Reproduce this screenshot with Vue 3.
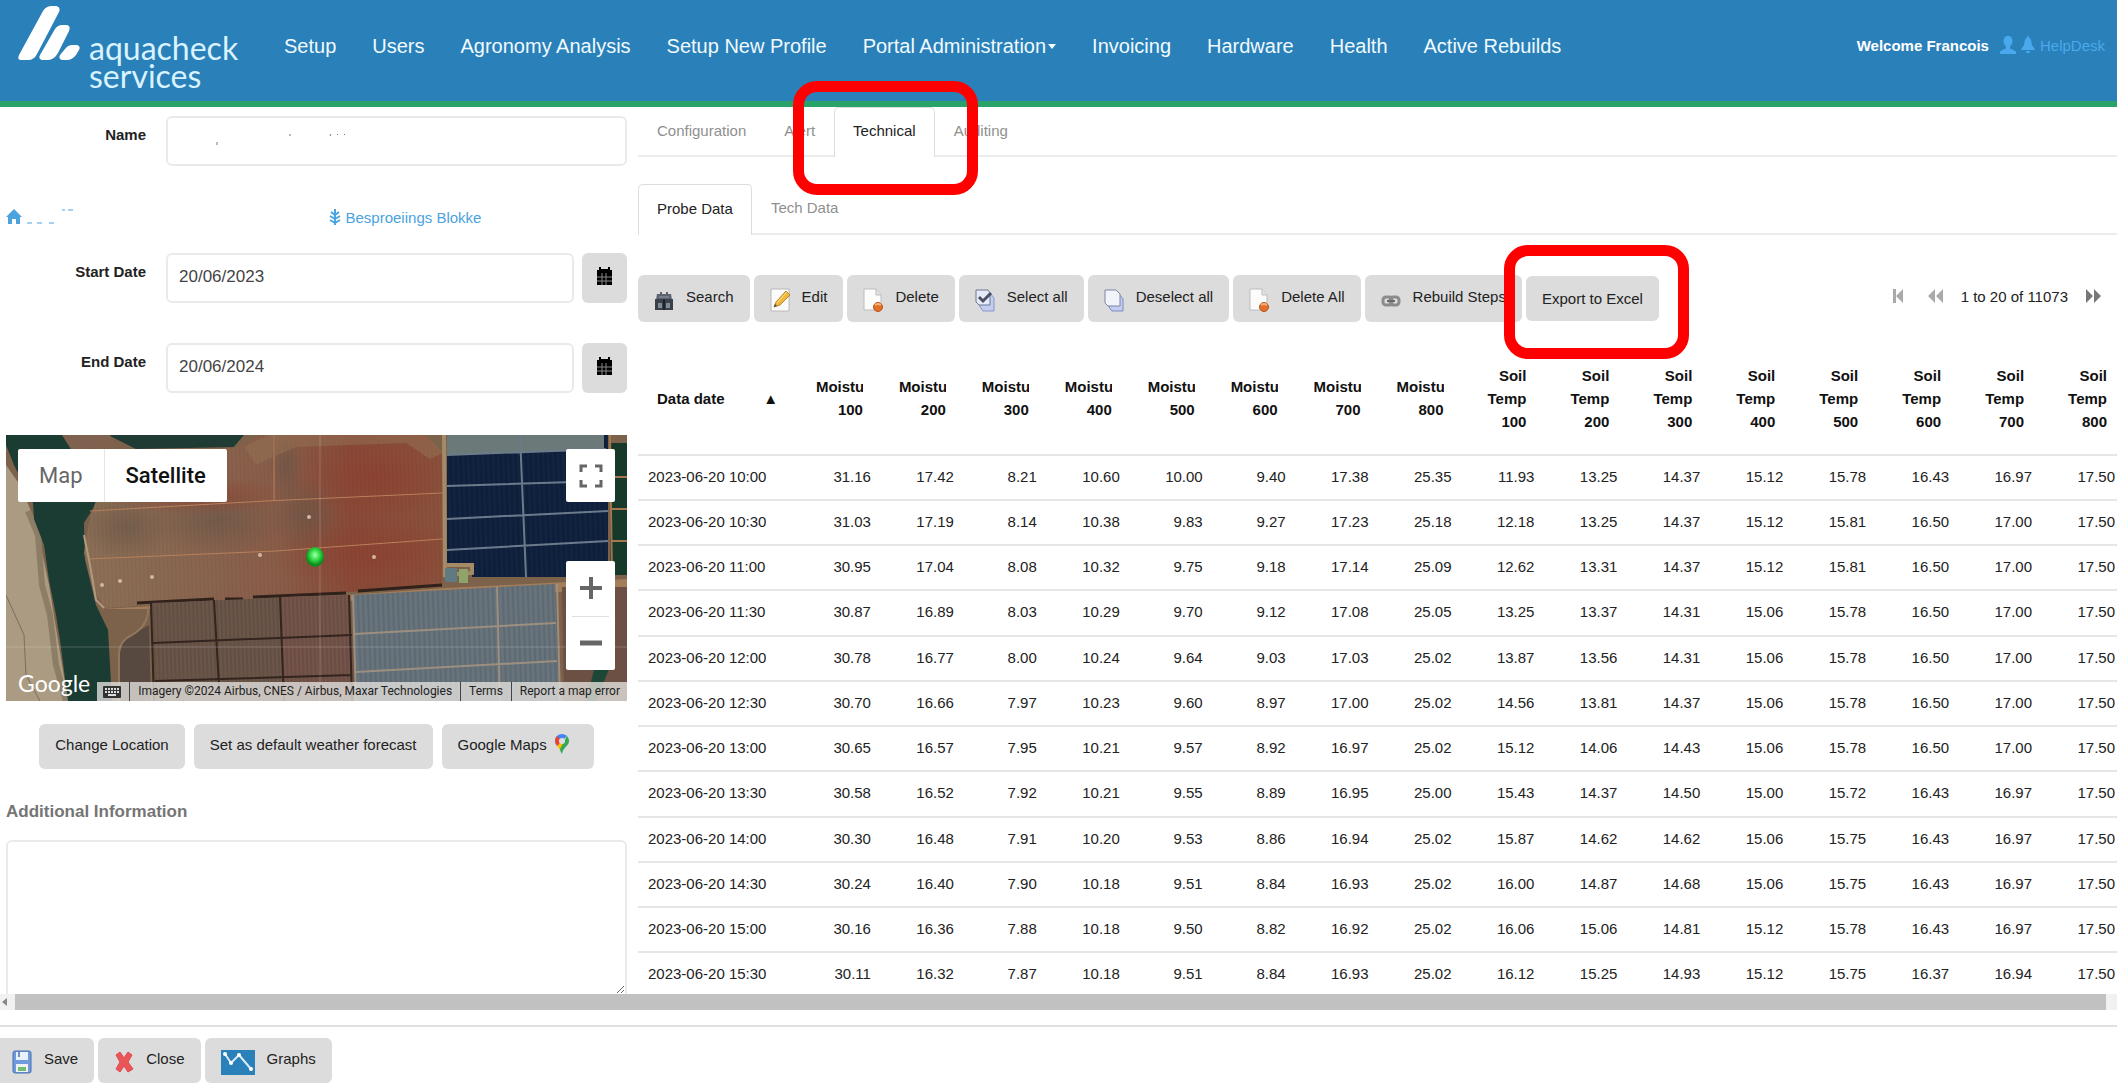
<script setup>
import { ref } from 'vue';

const menu = ['Setup', 'Users', 'Agronomy Analysis', 'Setup New Profile', 'Portal Administration', 'Invoicing', 'Hardware', 'Health', 'Active Rebuilds'];
const tabs = ['Configuration', 'Alert', 'Technical', 'Auditing'];
const subTabs = ['Probe Data', 'Tech Data'];

const activeTab = ref('Technical');
const activeSubTab = ref('Probe Data');
const name = ref('');
const startDate = ref('20/06/2023');
const endDate = ref('20/06/2024');
const info = ref('');

const tools = [
  { label: 'Search', icon: 'search' },
  { label: 'Edit', icon: 'edit' },
  { label: 'Delete', icon: 'delete' },
  { label: 'Select all', icon: 'select' },
  { label: 'Deselect all', icon: 'deselect' },
  { label: 'Delete All', icon: 'delete' },
  { label: 'Rebuild Steps', icon: 'link' }
];

const depths = [100, 200, 300, 400, 500, 600, 700, 800];

const rows = [
  ['2023-06-20 10:00', '31.16', '17.42', '8.21', '10.60', '10.00', '9.40', '17.38', '25.35', '11.93', '13.25', '14.37', '15.12', '15.78', '16.43', '16.97', '17.50'],
  ['2023-06-20 10:30', '31.03', '17.19', '8.14', '10.38', '9.83', '9.27', '17.23', '25.18', '12.18', '13.25', '14.37', '15.12', '15.81', '16.50', '17.00', '17.50'],
  ['2023-06-20 11:00', '30.95', '17.04', '8.08', '10.32', '9.75', '9.18', '17.14', '25.09', '12.62', '13.31', '14.37', '15.12', '15.81', '16.50', '17.00', '17.50'],
  ['2023-06-20 11:30', '30.87', '16.89', '8.03', '10.29', '9.70', '9.12', '17.08', '25.05', '13.25', '13.37', '14.31', '15.06', '15.78', '16.50', '17.00', '17.50'],
  ['2023-06-20 12:00', '30.78', '16.77', '8.00', '10.24', '9.64', '9.03', '17.03', '25.02', '13.87', '13.56', '14.31', '15.06', '15.78', '16.50', '17.00', '17.50'],
  ['2023-06-20 12:30', '30.70', '16.66', '7.97', '10.23', '9.60', '8.97', '17.00', '25.02', '14.56', '13.81', '14.37', '15.06', '15.78', '16.50', '17.00', '17.50'],
  ['2023-06-20 13:00', '30.65', '16.57', '7.95', '10.21', '9.57', '8.92', '16.97', '25.02', '15.12', '14.06', '14.43', '15.06', '15.78', '16.50', '17.00', '17.50'],
  ['2023-06-20 13:30', '30.58', '16.52', '7.92', '10.21', '9.55', '8.89', '16.95', '25.00', '15.43', '14.37', '14.50', '15.00', '15.72', '16.43', '16.97', '17.50'],
  ['2023-06-20 14:00', '30.30', '16.48', '7.91', '10.20', '9.53', '8.86', '16.94', '25.02', '15.87', '14.62', '14.62', '15.06', '15.75', '16.43', '16.97', '17.50'],
  ['2023-06-20 14:30', '30.24', '16.40', '7.90', '10.18', '9.51', '8.84', '16.93', '25.02', '16.00', '14.87', '14.68', '15.06', '15.75', '16.43', '16.97', '17.50'],
  ['2023-06-20 15:00', '30.16', '16.36', '7.88', '10.18', '9.50', '8.82', '16.92', '25.02', '16.06', '15.06', '14.81', '15.12', '15.78', '16.43', '16.97', '17.50'],
  ['2023-06-20 15:30', '30.11', '16.32', '7.87', '10.18', '9.51', '8.84', '16.93', '25.02', '16.12', '15.25', '14.93', '15.12', '15.75', '16.37', '16.94', '17.50']
];
</script>

<template>
  <div class="page">
    <header class="topbar">
      <a href="#" class="brand">
        <svg class="brand-mark" viewBox="0 0 62 56" aria-hidden="true">
          <g fill="#fff">
            <path d="M25 5Q28 0 34 0H38Q43 1 41 6L19 48Q16 54 10 54H3Q-1 54 1 49Z" />
            <path d="M37 23Q40 19 44 19H49Q53 20 51 25L40 47Q36 54 30 54H24Q20 53 22 49Z" />
            <path d="M47 43Q50 39 54 39H59Q63 40 61 44L58 49Q54 54 49 54H44Q40 53 42 49Z" />
          </g>
        </svg>
        <span class="brand-name">aquacheck<br>services</span>
      </a>
      <nav class="menu">
        <a v-for="item in menu" :key="item" href="#">{{ item }}<span v-if="item === 'Portal Administration'" class="caret"></span></a>
      </nav>
      <div class="user">
        <strong>Welcome Francois</strong>
        <a href="#" aria-label="Profile">
          <svg width="16" height="18" viewBox="0 0 16 18"><path fill="currentColor" d="M8 0C5 0 3.500 2 3.500 5c0 2.500 1 4.500 2.500 5.500V12c0 1-5 2-6 4v2h16v-2c-1-2-6-3-6-4v-1.500C11.500 9.500 12.500 7.500 12.500 5 12.500 2 11 0 8 0Z" /></svg>
        </a>
        <a href="#" aria-label="Notifications">
          <svg width="14" height="18" viewBox="0 0 14 18"><path fill="currentColor" d="M7 0C6 0 6 1 6 1.500 3.500 3 3.500 6 3 9c-.4 2-3 3-3 5h14c0-2-2.600-3-3-5-.5-3-.5-6-3-7.500C8 1 8 0 7 0ZM5 15h4c0 3-4 3-4 0Z" /></svg>
        </a>
        <a href="#">HelpDesk</a>
      </div>
    </header>

    <main class="body">
      <section class="left">
        <div class="field">
          <label for="name">Name</label>
          <div class="control">
            <input id="name" v-model="name" type="text">
            <svg class="traces" width="140" height="12" viewBox="0 0 140 12" aria-hidden="true">
              <path d="M1 9v3M74 1v2M114 3l1-2M121 2l1-1M128 2l1-1" stroke="#777" fill="none" />
            </svg>
          </div>
        </div>

        <div class="links">
          <a href="#" aria-label="Home">
            <svg width="88" height="18" viewBox="0 0 88 18">
              <path fill="currentColor" d="M8 1 0 9h2v7h4v-5h4v5h4V9h2Z" />
              <path d="M21 15h5M31 15h5M43 15h5M56 2h3M62 2h5" stroke="currentColor" />
            </svg>
          </a>
          <a href="#" class="block-link">
            <svg width="12" height="16" viewBox="0 0 12 16"><path d="M6 0v16M6 6 2 3M6 6l4-3M6 10 1 7M6 10l5-3M6 14l-5-3M6 14l5-3" stroke="currentColor" stroke-width="2" fill="none" /></svg>
            Besproeiings Blokke
          </a>
        </div>

        <div class="field">
          <label for="start">Start Date</label>
          <div class="control">
            <input id="start" v-model="startDate" type="text">
            <button class="btn calendar" aria-label="Pick start date">
              <svg width="15" height="18" viewBox="0 0 15 18"><path d="M2 0h2v2h7V0h2v3h2v3H0V3h2Z" /><path d="M0 6h15v12H0Z" /><path d="M0 10h15M0 14h15M5 6v12M9 6v12" stroke="#888" /></svg>
            </button>
          </div>
        </div>

        <div class="field">
          <label for="end">End Date</label>
          <div class="control">
            <input id="end" v-model="endDate" type="text">
            <button class="btn calendar" aria-label="Pick end date">
              <svg width="15" height="18" viewBox="0 0 15 18"><path d="M2 0h2v2h7V0h2v3h2v3H0V3h2Z" /><path d="M0 6h15v12H0Z" /><path d="M0 10h15M0 14h15M5 6v12M9 6v12" stroke="#888" /></svg>
            </button>
          </div>
        </div>

        <div class="map">
          <svg class="imagery" viewBox="0 0 621 266" preserveAspectRatio="none" aria-hidden="true">
            <defs>
              <linearGradient id="soil" x1="0" x2="1" y1="0" y2="0">
                <stop offset="0" stop-color="#8c7056" />
                <stop offset=".3" stop-color="#8a6650" />
                <stop offset=".55" stop-color="#8a5c48" />
                <stop offset=".75" stop-color="#8a4a38" />
                <stop offset="1" stop-color="#8b523c" />
              </linearGradient>
              <radialGradient id="shade">
                <stop offset="0" stop-color="#665548" stop-opacity=".6" />
                <stop offset="1" stop-color="#665548" stop-opacity="0" />
              </radialGradient>
              <radialGradient id="rust">
                <stop offset="0" stop-color="#8f402f" stop-opacity=".7" />
                <stop offset="1" stop-color="#8f402f" stop-opacity="0" />
              </radialGradient>
              <radialGradient id="pin" cx=".5" cy=".4">
                <stop offset="0" stop-color="#a9ffb0" />
                <stop offset=".5" stop-color="#35e04a" />
                <stop offset="1" stop-color="#0d8a1c" />
              </radialGradient>
              <pattern id="vines" width="4" height="8" patternUnits="userSpaceOnUse" patternTransform="rotate(-2)">
                <path d="M1 0v8" stroke="#2b2320" stroke-opacity=".3" />
              </pattern>
              <pattern id="rowsBlue" width="5" height="8" patternUnits="userSpaceOnUse" patternTransform="rotate(-2)">
                <path d="M1 0v8" stroke="#20344d" stroke-opacity=".5" />
              </pattern>
            </defs>
            <rect width="621" height="266" fill="#7c614b" />
            <path d="M0 30 14 50 30 88 43 150 52 205 62 266H0Z" fill="#ab9b82" />
            <path d="M22 76 32 100 36 150 44 180 50 230 60 266" stroke="#8c7d66" stroke-width="6" fill="none" />
            <path d="M0 160 18 200 20 240 34 266" stroke="#7c6e5a" fill="none" />
            <path d="M0 0H56L66 16 92 66 78 88 79 125 90 170 102 195 106 266H62L54 205 50 180 43 145 38 110 28 84 27 68 8 30 0 10Z" fill="#1b3c33" />
            <path d="M102 0H238L226 14 130 14Z" fill="#203a34" />
            <path d="M56 0H104L112 12 66 14Z" fill="#80604e" />
            <path d="M90 66 130 14 232 12 254 0H420L437 20 436 152 340 157 98 173 86 150 78 118 84 82Z" fill="url(#soil)" />
            <ellipse cx="120" cy="92" rx="46" ry="34" fill="url(#shade)" />
            <ellipse cx="210" cy="86" rx="70" ry="34" fill="url(#shade)" />
            <ellipse cx="300" cy="80" rx="36" ry="40" fill="url(#shade)" />
            <ellipse cx="280" cy="32" rx="18" ry="34" fill="url(#shade)" />
            <ellipse cx="370" cy="42" rx="80" ry="44" fill="url(#rust)" />
            <ellipse cx="370" cy="120" rx="100" ry="38" fill="url(#rust)" />
            <ellipse cx="190" cy="60" rx="90" ry="20" fill="url(#rust)" />
            <path d="M90 66 130 14 232 12 254 0H420L437 20 436 152 340 157 98 173 86 150 78 118 84 82Z" fill="url(#vines)" fill-opacity=".4" />
            <path d="M84 76 260 66 436 58M82 124 270 116 436 104M268 0V66" stroke="#b8805a" fill="none" />
            <path d="M78 100 84 130 90 165 98 173" stroke="#b19a7e" stroke-width="2" fill="none" />
            <path d="M238 12 262 0H420L437 18 424 24 400 8 290 12 250 30Z" fill="#937253" fill-opacity=".5" />
            <g fill="#d0b8a4"><circle cx="96" cy="150" r="2" /><circle cx="114" cy="146" r="2" /><circle cx="146" cy="142" r="2" /><circle cx="254" cy="120" r="2" /><circle cx="303" cy="82" r="2" /><circle cx="368" cy="122" r="2" /></g>
            <path d="M441 0H602V142H466V128H441Z" fill="#0e1f3b" />
            <path d="M441 0H602V142H466V128H441Z" fill="url(#rowsBlue)" />
            <path d="M441 0H598V14L441 20Z" fill="#6b7a78" />
            <path d="M441 20 600 14M441 51 600 46M441 84 602 76M441 115 602 106M514 0 520 142" stroke="#6c7b8c" stroke-width="2" fill="none" />
            <path d="M438 0 439 140 466 138V130H441" stroke="#a58a66" stroke-width="4" fill="none" />
            <path d="M604 8H621V140H604Z" fill="#17392a" />
            <path d="M604 0 606 146M606 42H621M606 74H621M606 106H621" stroke="#a3784f" stroke-width="2" />
            <path d="M439 133h12v14h-12Z" fill="#5f7a80" />
            <path d="M453 134h9v14h-9Z" fill="#8fa46a" />
            <path d="M96 174 340 160 440 153 621 144V154L340 166 140 174Z" fill="#a47d5b" />
            <path d="M131 168 208 164M219 164h18M247 162 340 158M352 156 436 150" stroke="#30211b" stroke-width="3" />
            <path d="M145 168 344 160 350 266H147Z" fill="#6b5649" />
            <path d="M276 162 344 160 348 266H278Z" fill="#75544a" />
            <path d="M145 168 344 160 350 266H147Z" fill="url(#vines)" />
            <path d="M147 208 346 200M149 246 346 240M145 168 148 266M208 165 213 250M274 162 278 266M343 160 346 266" stroke="#33241e" stroke-width="2" fill="none" />
            <path d="M113 266V218Q114 205 126 200L143 190 145 266Z" fill="#57493f" />
            <path d="M113 266V218Q114 205 126 200 143 190 142 172" stroke="#91775e" stroke-width="2" fill="none" />
            <path d="M348 160 549 149 553 266H350Z" fill="#68737a" />
            <path d="M348 160 549 149 553 266H350Z" fill="url(#rowsBlue)" fill-opacity=".6" />
            <path d="M348 199 550 188M350 237 551 226M491 152 494 266M347 160 350 266M551 149 554 266" stroke="#9c8f7f" stroke-width="2" fill="none" />
            <path d="M556 152H621V266H558Z" fill="#6b5043" />
            <path d="M580 266 588 235 600 220 608 222 590 266Z" fill="#1c4636" />
            <path d="M314 0V266M0 212H621" stroke="#fff" stroke-opacity=".2" />
            <ellipse cx="309" cy="122" rx="9" ry="10" fill="url(#pin)" />
          </svg>
          <div class="map-type">
            <button>Map</button>
            <button class="active">Satellite</button>
          </div>
          <button class="fullscreen" aria-label="Toggle fullscreen view">
            <svg width="24" height="24" viewBox="0 0 24 24"><path d="M2 8V2h6M16 2h6v6M22 16v6h-6M8 22H2v-6" stroke="#666" stroke-width="3" fill="none" /></svg>
          </button>
          <div class="zoom">
            <button aria-label="Zoom in"><svg width="24" height="24" viewBox="0 0 24 24"><path d="M12 1v22M1 12h22" stroke="#666" stroke-width="4" /></svg></button>
            <button aria-label="Zoom out"><svg width="24" height="24" viewBox="0 0 24 24"><path d="M1 12h22" stroke="#666" stroke-width="5" /></svg></button>
          </div>
          <span class="google">Google</span>
          <div class="credits">
            <svg width="18" height="12" viewBox="0 0 18 12"><rect width="18" height="12" rx="1" fill="#333" /><path d="M2 3h14M2 6h14" stroke="#ddd" stroke-width="2" stroke-dasharray="2 1" /><path d="M5 9h8" stroke="#ddd" stroke-width="2" /></svg>
            <span>Imagery ©2024 Airbus, CNES / Airbus, Maxar Technologies</span>
            <a href="#">Terms</a>
            <a href="#">Report a map error</a>
          </div>
        </div>

        <div class="map-actions">
          <button class="btn">Change Location</button>
          <button class="btn">Set as default weather forecast</button>
          <button class="btn maps">
            Google Maps
            <svg width="14" height="20" viewBox="0 0 14 20">
              <path d="M7 0C3 0 0 3 0 7c0 2 1 4 2 5L12 2C11 1 9 0 7 0Z" fill="#4285f4" />
              <path d="M2 2 7 7 3 12C1 10 0 9 0 7c0-2 1-4 2-5Z" fill="#ea4335" />
              <path d="M2 12 7 7l3 3-5 6Z" fill="#fbbc04" />
              <path d="M12 2c1 1 2 3 2 5 0 5-6 6-7 13-1-2-2-3-2-5Z" fill="#34a853" />
              <circle cx="7" cy="7" r="3" fill="#ddd" />
            </svg>
          </button>
        </div>

        <label class="info-label" for="info">Additional Information</label>
        <textarea id="info" v-model="info"></textarea>
      </section>

      <section class="right">
        <nav class="tabs">
          <button v-for="tab in tabs" :key="tab" :class="['tab', { active: tab === activeTab, marked: tab === 'Technical' }]" @click="activeTab = tab">{{ tab }}</button>
        </nav>
        <nav class="tabs sub">
          <button v-for="tab in subTabs" :key="tab" :class="['tab', { active: tab === activeSubTab }]" @click="activeSubTab = tab">{{ tab }}</button>
        </nav>

        <div class="toolbar">
          <button v-for="tool in tools" :key="tool.label" class="btn tool">
            <svg v-if="tool.icon === 'search'" class="icon" viewBox="0 0 20 24">
              <path d="M3 6h3V4h2v2h4V4h2v2h3l1 6H2Z" fill="#5b6470" />
              <path d="M1 11h18v11H1Z" fill="#3a414b" />
              <path d="M4 15h4v5H4ZM12 15h4v5h-4Z" fill="#7f8b99" />
              <path d="M5 9h10" stroke="#939da8" stroke-width="1" />
              <path d="M10 11v11" stroke="#222" stroke-width="2" />
            </svg>
            <svg v-else-if="tool.icon === 'edit'" class="icon" viewBox="0 0 20 24">
              <path d="M1 1h18v22H1Z" fill="#fbfbfb" stroke="#b8b8b8" />
              <path d="M4 19 6 14 16 3l4 4L10 17Z" fill="#f0b83a" stroke="#b98a2b" />
              <path d="M7 15 17 4" stroke="#ffe38d" stroke-width="1" />
              <path d="m4 19 1-3 2 2Z" fill="#444" />
            </svg>
            <svg v-else-if="tool.icon === 'delete'" class="icon" viewBox="0 0 20 24">
              <path d="M1 1h12l5 6v15H1Z" fill="#fcfcfc" stroke="#bdbdbd" />
              <path d="M13 1v6h5" fill="#e4e4e4" stroke="#bdbdbd" />
              <circle cx="15" cy="19" r="4.500" fill="#e2702a" stroke="#b85316" />
              <path d="M12 17q3-2 6 0" stroke="#f7b27c" stroke-width="2" fill="none" />
            </svg>
            <svg v-else-if="tool.icon === 'select'" class="icon" viewBox="0 0 20 24">
              <path d="M5 5h10l4 5v13H8l-4-6Z" fill="#c3cdf2" stroke="#8795c8" />
              <path d="M1 2h12l2 3v12H4l-3-3Z" fill="#e6eaf8" stroke="#6d7891" />
              <path d="m4 9 4 4 8-8" stroke="#4a5160" stroke-width="3" fill="none" />
            </svg>
            <svg v-else-if="tool.icon === 'deselect'" class="icon" viewBox="0 0 20 24">
              <path d="M6 6h9l4 5v12H8l-3-4Z" fill="#c3cdf2" stroke="#7d8bc2" />
              <path d="M1 2h11l4 4v12H4l-3-3Z" fill="#f2f4fc" stroke="#7b86a0" />
            </svg>
            <svg v-else class="icon" viewBox="0 0 20 24">
              <g fill="none" stroke="#8b8b8b" stroke-width="3"><rect x="2" y="9" width="9" height="8" rx="3" /><rect x="9" y="9" width="9" height="8" rx="3" /></g>
              <path d="M6 13h8" stroke="#6a6a6a" stroke-width="2" />
            </svg>
            <span>{{ tool.label }}</span>
          </button>
          <button class="btn export">Export to Excel</button>

          <div class="pager">
            <button class="first" aria-label="First page" disabled><svg width="12" height="14" viewBox="0 0 12 14"><path d="M1 0h3v14H1ZM11 0v14L4 7Z" fill="#aaa" /></svg></button>
            <button aria-label="Previous page" disabled><svg width="15" height="14" viewBox="0 0 15 14"><path d="M7 0v14L0 7ZM15 0v14L8 7Z" fill="#aaa" /></svg></button>
            <span>1 to 20 of 11073</span>
            <button aria-label="Next page"><svg width="15" height="14" viewBox="0 0 15 14"><path d="M0 0v14l7-7ZM8 0v14l7-7Z" fill="#777" /></svg></button>
          </div>
        </div>

        <div class="grid-wrap">
          <table class="grid">
            <thead>
              <tr>
                <th class="date"><div>Data date <span>▲</span></div></th>
                <th v-for="d in depths" :key="'m' + d"><span class="cut">Moistu</span>{{ d }}</th>
                <th v-for="d in depths" :key="'t' + d">Soil<br>Temp<br>{{ d }}</th>
              </tr>
            </thead>
            <tbody>
              <tr v-for="row in rows" :key="row[0]">
                <td v-for="(cell, i) in row" :key="i">{{ cell }}</td>
              </tr>
            </tbody>
          </table>
        </div>
      </section>
    </main>

    <div class="scrollbar" aria-hidden="true">
      <svg width="15" height="16" viewBox="0 0 15 16"><path d="M7 4v8L2 8Z" fill="#888" /></svg>
      <div class="thumb"></div>
    </div>

    <footer class="actions">
      <button class="btn tool save">
        <svg class="icon" viewBox="0 0 20 24">
          <path d="M1 3q0-2 2-2h14q2 0 2 2v18q0 2-2 2H3q-2 0-2-2Z" fill="#6f9bdc" stroke="#4a6fae" />
          <path d="M4 2h12v8H4Z" fill="#e9f1fc" />
          <path d="M7 2v5" stroke="#6f8fc2" stroke-width="2" />
          <path d="M4 14h12v8H4Z" fill="#eef2f6" />
          <path d="M6 17h8v4H6Z" fill="#6fbf6c" />
        </svg>
        <span>Save</span>
      </button>
      <button class="btn tool">
        <svg class="icon" viewBox="0 0 20 24">
          <path d="M2 5 6 2l4 6 4-6 4 3-4 7 5 7-5 3-4-6-4 6-4-3 4-7Z" fill="#ea5558" stroke="#e0484c" />
        </svg>
        <span>Close</span>
      </button>
      <button class="btn tool">
        <svg width="34" height="25" viewBox="0 0 34 25">
          <rect width="34" height="25" fill="#2a80b9" />
          <path d="m4 4 6 9 8-8 12 14" stroke="#d8ecf8" stroke-width="2" fill="none" />
          <g fill="#fff"><circle cx="4" cy="4" r="2" /><circle cx="10" cy="13" r="2" /><circle cx="18" cy="5" r="2" /><circle cx="30" cy="19" r="2" /></g>
        </svg>
        <span>Graphs</span>
      </button>
    </footer>
  </div>
</template>

<style>
body { background: #fff; overflow: hidden; }
</style>

<style scoped>
.page { height: 100vh; display: flex; flex-direction: column; font-family: "Liberation Sans", Arial, sans-serif; font-size: 15px; color: #222; }
.page *, .page *::after { box-sizing: border-box; }
a { text-decoration: none; color: inherit; }
button, input, textarea { font: inherit; color: inherit; }
button { cursor: pointer; }
svg { display: block; flex: none; }

/* Top bar */
.topbar { display: flex; height: 107px; flex: none; background: #2a80b9; border-bottom: 6px solid #2aa36b; color: #fff; padding: 0 12px 0 18px; }
.brand { display: flex; width: 266px; flex: none; }
.brand-mark { width: 62px; height: 56px; margin-top: 6px; }
.brand-name { margin: 34px 0 0 9px; font-family: Lato, sans-serif; font-size: 32px; line-height: 28px; color: #d9f3ff; }
.menu { display: flex; flex: 1; gap: 36px; padding-top: 34px; font-size: 20px; line-height: 24px; color: #f0faff; white-space: nowrap; }
.caret { display: inline-block; margin-left: 2px; vertical-align: 4px; border: 4px solid transparent; border-top: 5px solid; border-bottom: 0; }
.user { display: flex; align-items: center; height: 24px; gap: 5px; margin-top: 33px; color: #4aa9ec; }
.user strong { color: #fff; margin-right: 6px; }

.body { display: grid; grid-template-columns: minmax(0, 22fr) minmax(0, 51fr); flex: 1; min-height: 0; }

.btn { border: 0; border-radius: 6px; background: #dcdcdc; padding: 0 16px; height: 45px; white-space: nowrap; }

/* Left column */
.left { display: flex; flex-direction: column; min-height: 0; overflow: hidden; padding: 9px 11px 0 6px; }
.field { display: flex; gap: 20px; flex: none; }
.field + .field { margin-top: 40px; }
.field label { width: 140px; padding-bottom: 13px; align-self: center; text-align: right; font-weight: bold; }
.control { flex: 1; display: flex; gap: 8px; position: relative; }
.control input { flex: 1; min-width: 0; height: 50px; border: 2px solid #eaeaea; border-radius: 6px; padding: 0 11px 2px; font-size: 17px; color: #444; background: #fff; }
.traces { position: absolute; left: 50px; top: 17px; }
.calendar { width: 45px; height: 50px; display: grid; place-items: center; padding: 0 0 4px; }
.links { display: grid; grid-template-columns: 1fr 1fr; align-items: center; height: 24px; flex: none; margin: 39px 0 24px; color: #4aa3df; }
.block-link { display: flex; align-items: center; gap: 5px; padding-left: 12px; }

.map { position: relative; flex: none; height: 266px; margin-top: 42px; overflow: hidden; font-family: Roboto, sans-serif; }
.imagery { width: 100%; height: 100%; }
.map button { background: #fff; border: 0; padding: 0; }
.map-type { position: absolute; left: 12px; top: 14px; display: flex; height: 53px; border-radius: 2px; overflow: hidden; font-size: 22px; color: #666; }
.map .map-type button { padding: 0 21px; }
.map .map-type .active { border-left: 1px solid #e6e6e6; font-weight: 500; color: #111; }
.fullscreen { position: absolute; right: 12px; top: 14px; width: 49px; height: 53px; display: grid; place-items: center; border-radius: 2px; }
.zoom { position: absolute; right: 12px; bottom: 31px; width: 49px; height: 109px; padding: 0 6px; display: grid; grid-template-rows: 1fr 1fr; background: #fff; border-radius: 2px; }
.zoom button { display: grid; place-items: center; }
.zoom button + button { border-top: 1px solid #e0e0e0; }
.google { position: absolute; left: 12px; bottom: 4px; font-family: Lato, sans-serif; font-size: 23px; line-height: 28px; color: #fff; }
.credits { position: absolute; right: 0; bottom: 0; height: 19px; display: flex; align-items: center; gap: 8px; padding: 0 7px 0 6px; background: rgba(225, 222, 220, 0.8); font-size: 12px; color: #222; white-space: nowrap; }
.credits span, .credits a { border-left: 1px solid #444; padding-left: 8px; line-height: 19px; }

.map-actions { display: flex; justify-content: center; gap: 9px; flex: none; margin-top: 23px; }
.map-actions .btn { padding-bottom: 5px; }
.map-actions .maps { display: flex; align-items: center; gap: 8px; padding-right: 25px; }
.info-label { margin-top: 32px; font-size: 17px; line-height: 22px; font-weight: bold; color: #757575; }
textarea { flex: 1; min-height: 0; margin-top: 17px; border: 2px solid #eaeaea; border-bottom: 0; border-radius: 6px 6px 0 0; background: #fff; }

/* Right column */
.right { display: flex; flex-direction: column; min-width: 0; min-height: 0; }
.tabs { display: flex; height: 50px; flex: none; border-bottom: 2px solid #ececec; }
.tab { border: 1px solid transparent; background: none; padding: 0 18px 4px; height: 50px; color: #8f8f8f; }
.tab.active { background: #fff; border: 1px solid #ddd; border-bottom: 0; border-radius: 5px 5px 0 0; color: #222; }
.tabs.sub { margin-top: 27px; height: 51px; }
.sub .tab { height: 51px; }
.marked, .export { position: relative; }
.marked::after, .export::after { content: ""; position: absolute; z-index: 2; width: 185px; height: 114px; border: 11px solid #f00; border-radius: 24px; pointer-events: none; }
.marked::after { left: -42px; top: -27px; }
.export::after { left: -22px; top: -31px; }

.toolbar { display: flex; align-items: center; gap: 4px; flex: none; margin-top: 40px; }
.tool { display: flex; align-items: center; gap: 12px; height: 47px; padding-top: 3px; }
.tool span { padding-bottom: 8px; }
.icon { width: 20px; height: 24px; }
.pager { display: flex; align-items: center; gap: 18px; margin-left: auto; padding: 0 16px 5px 0; }
.pager button { border: 0; background: none; padding: 0; }
.pager .first { margin-right: 6px; }

.grid-wrap { flex: 1; min-height: 0; overflow: hidden; margin-top: 23px; }
.grid { width: calc(100% + 8px); table-layout: fixed; border-collapse: separate; border-spacing: 0; text-align: right; }
th { height: 111px; padding: 0 18px 3px 0; line-height: 23px; vertical-align: middle; color: #111; }
th, td { border-bottom: 2px solid #e6e6e6; }
.date { width: 160px; padding: 0 20px 3px 19px; }
.date div { display: flex; justify-content: space-between; }
.cut { display: block; width: 47px; margin-left: auto; overflow: hidden; text-align: left; }
td { height: 45px; padding: 0 10px 3px 0; }
tr:nth-child(4n) td { height: 46px; }
td:first-child { text-align: left; padding-left: 10px; padding-right: 0; white-space: nowrap; }

/* Bottom */
.scrollbar { display: flex; flex: none; height: 16px; padding-right: 11px; background: #f1f1f1; }
.thumb { flex: 1; background: #c1c1c1; }
.actions { display: flex; gap: 4px; flex: none; margin-top: 15px; padding: 11px 0 7px; border-top: 2px solid #e0e0e0; }
.actions .btn { height: 45px; }
.save { border-radius: 0 6px 6px 0; padding-left: 12px; }
</style>
